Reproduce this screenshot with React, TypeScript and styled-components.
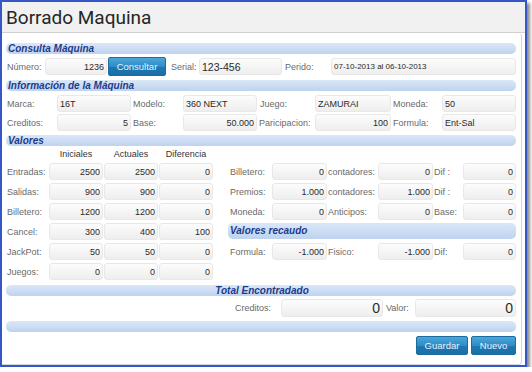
import React from "react";
import styled, { createGlobalStyle } from "styled-components";

const GlobalStyle = createGlobalStyle`
  html, body { margin: 0; padding: 0; background: #ffffff; }
  body { font-family: "Liberation Sans", Arial, sans-serif; }
  * { box-sizing: border-box; }
`;

const Window = styled.div`
  width: 527px;
  height: 367px;
  border: 2px solid #3657c8;
  box-shadow: 3px 3px 3px rgba(0, 0, 0, 0.45);
  background: #ffffff;
  display: flex;
  flex-direction: column;
`;

const TitleBar = styled.div`
  height: 31px;
  flex: none;
  background: #f1f1f1;
  border-bottom: 1px solid #d0d0d0;
  display: flex;
  align-items: center;
  padding-left: 4px;
  font-family: Roboto, "Liberation Sans", sans-serif;
  font-size: 19px;
  color: #262626;
`;

const Panel = styled.div`
  flex: 1;
  margin-right: 3px;
  border-right: 1px solid #d8d8d8;
  border-bottom: 1px solid #d8d8d8;
  border-radius: 0 4px 4px 0;
  padding: 10px 5px 0 4px;
  display: flex;
  flex-direction: column;
`;

const SectionBar = styled.div<{ $center?: boolean; $mt?: number; $h?: number }>`
  height: ${(p) => p.$h ?? 11}px;
  margin-top: ${(p) => p.$mt ?? 0}px;
  border-radius: 5px;
  background: linear-gradient(#dbe7f7, #bed3ef);
  font: italic bold 10px "Liberation Sans", Arial, sans-serif;
  line-height: ${(p) => p.$h ?? 11}px;
  color: #1c3b8c;
  padding-left: 2px;
  text-align: ${(p) => (p.$center ? "center" : "left")};
  white-space: nowrap;
`;

const FieldRow = styled.div<{ $cols: string; $h?: number; $mt?: number }>`
  display: grid;
  grid-template-columns: ${(p) => p.$cols};
  height: ${(p) => p.$h ?? 17}px;
  margin-top: ${(p) => p.$mt ?? 0}px;
  align-items: center;
`;

const Label = styled.span<{ $pl?: number }>`
  font-size: 9px;
  color: #6a6a6a;
  padding-left: ${(p) => p.$pl ?? 2}px;
  white-space: nowrap;
`;

const Field = styled.input<{ $right?: boolean; $fs?: number; $h?: number }>`
  width: 100%;
  height: ${(p) => p.$h ?? 17}px;
  margin: 0;
  border: 1px solid #e8e8e8;
  border-radius: 3px;
  background: linear-gradient(#fcfcfc, #eeeeee);
  font-family: "Liberation Sans", Arial, sans-serif;
  font-size: ${(p) => p.$fs ?? 9}px;
  color: #2a2a2a;
  text-align: ${(p) => (p.$right ? "right" : "left")};
  padding: 0 2px 0 2px;
  outline: none;
`;

const Button = styled.button<{ $w: number }>`
  width: ${(p) => p.$w}px;
  height: 19px;
  margin: 0;
  padding: 0;
  border: 1px solid #1b6c9f;
  border-radius: 2px;
  background: linear-gradient(#4ba6d9 0%, #2e8cc6 50%, #1f78b1 55%, #1a6ea6 100%);
  color: #e6f3ff;
  font-family: "Liberation Sans", Arial, sans-serif;
  font-size: 9.5px;
  cursor: pointer;
`;

const ConsultarButton = styled(Button)`
  margin-left: 1px;
`;

const ValoresGrid = styled.div`
  display: grid;
  grid-template-columns: 222px 288px;
  grid-template-rows: 12px repeat(6, 17px);
  row-gap: 3px;
  margin-top: 2px;
`;

const LeftRow = styled.div`
  display: grid;
  grid-template-columns: 42px 54px 54px 54px;
  column-gap: 1px;
  align-items: center;
`;

const RightRow = styled.div`
  display: grid;
  grid-template-columns: 44px 55px 51px 55px 30px 53px;
  align-items: center;
`;

const ColHead = styled.span`
  font-size: 9px;
  color: #333333;
  text-align: center;
`;

const ButtonRow = styled.div`
  display: flex;
  justify-content: flex-end;
  gap: 3px;
  margin-top: 4px;
`;

const leftRows: [string, string, string, string][] = [
  ["Entradas:", "2500", "2500", "0"],
  ["Salidas:", "900", "900", "0"],
  ["Billetero:", "1200", "1200", "0"],
  ["Cancel:", "300", "400", "100"],
  ["JackPot:", "50", "50", "0"],
  ["Juegos:", "0", "0", "0"],
];

type RightLine = [string, string, string, string, string, string] | "bar" | null;

const rightRows: RightLine[] = [
  ["Billetero:", "0", "contadores:", "0", "Dif :", "0"],
  ["Premios:", "1.000", "contadores:", "1.000", "Dif :", "0"],
  ["Moneda:", "0", "Anticipos:", "0", "Base:", "0"],
  "bar",
  ["Formula:", "-1.000", "Fisico:", "-1.000", "Dif:", "0"],
  null,
];

export default function App() {
  return (
    <>
      <GlobalStyle />
      <Window>
        <TitleBar>Borrado Maquina</TitleBar>
        <Panel>
          <SectionBar>Consulta Máquina</SectionBar>
          <FieldRow $cols="39px 62px 59px 33px 83px 49px 185px" $h={19} $mt={3}>
            <Label $pl={1}>Número:</Label>
            <Field $right readOnly value="1236" />
            <ConsultarButton $w={58}>Consultar</ConsultarButton>
            <Label $pl={5}>Serial:</Label>
            <Field readOnly value="123-456" $fs={10.5} />
            <Label $pl={3}>Perido:</Label>
            <Field readOnly value="07-10-2013 al 06-10-2013" $fs={8} />
          </FieldRow>

          <SectionBar $mt={4}>Información de la Máquina</SectionBar>
          <FieldRow $cols="51px 74px 52px 74px 58px 76px 51px 74px" $mt={4}>
            <Label $pl={1}>Marca:</Label>
            <Field readOnly value="16T" />
            <Label>Modelo:</Label>
            <Field readOnly value="360 NEXT" />
            <Label $pl={3}>Juego:</Label>
            <Field readOnly value="ZAMURAI" />
            <Label>Moneda:</Label>
            <Field readOnly value="50" />
          </FieldRow>
          <FieldRow $cols="51px 74px 52px 74px 58px 76px 51px 74px" $mt={2}>
            <Label $pl={1}>Creditos:</Label>
            <Field $right readOnly value="5" />
            <Label>Base:</Label>
            <Field $right readOnly value="50.000" />
            <Label $pl={2}>Paricipacion:</Label>
            <Field $right readOnly value="100" />
            <Label>Formula:</Label>
            <Field readOnly value="Ent-Sal" />
          </FieldRow>

          <SectionBar $mt={4}>Valores</SectionBar>
          <ValoresGrid>
            <LeftRow>
              <span />
              <ColHead>Iniciales</ColHead>
              <ColHead>Actuales</ColHead>
              <ColHead>Diferencia</ColHead>
            </LeftRow>
            <span />
            {leftRows.map((r, i) => (
              <React.Fragment key={r[0]}>
                <LeftRow>
                  <Label $pl={1}>{r[0]}</Label>
                  <Field $right readOnly value={r[1]} />
                  <Field $right readOnly value={r[2]} />
                  <Field $right readOnly value={r[3]} />
                </LeftRow>
                {(() => {
                  const rr = rightRows[i];
                  if (rr === "bar") return <SectionBar $h={16}>Valores recaudo</SectionBar>;
                  if (rr === null) return <span />;
                  return (
                    <RightRow>
                      <Label>{rr[0]}</Label>
                      <Field $right readOnly value={rr[1]} />
                      <Label $pl={1}>{rr[2]}</Label>
                      <Field $right readOnly value={rr[3]} />
                      <Label $pl={1}>{rr[4]}</Label>
                      <Field $right readOnly value={rr[5]} />
                    </RightRow>
                  );
                })()}
              </React.Fragment>
            ))}
          </ValoresGrid>

          <SectionBar $center $mt={5}>Total Encontradado</SectionBar>
          <FieldRow $cols="227px 48px 102px 32px 101px" $h={18} $mt={3}>
            <span />
            <Label>Creditos:</Label>
            <Field $right readOnly value="0" $fs={14} $h={18} />
            <Label $pl={3}>Valor:</Label>
            <Field $right readOnly value="0" $fs={14} $h={18} />
          </FieldRow>
          <SectionBar $mt={4} />
          <ButtonRow>
            <Button $w={52}>Guardar</Button>
            <Button $w={45}>Nuevo</Button>
          </ButtonRow>
        </Panel>
      </Window>
    </>
  );
}
